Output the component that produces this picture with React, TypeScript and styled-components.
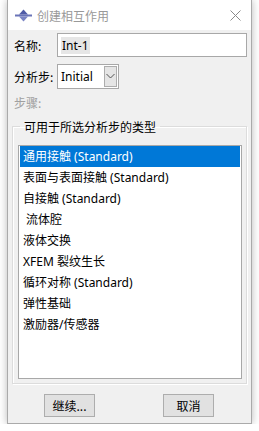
import styled, { createGlobalStyle } from "styled-components";

const GlobalStyle = createGlobalStyle`
  html, body {
    margin: 0;
    padding: 0;
    background: #ffffff;
  }
  body {
    font-family: "Noto Sans", "Noto Sans CJK SC", sans-serif;
    font-size: 12px;
    color: #000;
  }
`;

const Window = styled.div`
  margin-left: 7px;
  width: 243px;
  height: 423px;
  background: #f0f0f0;
  border: 1px solid #aaaaaa;
  border-top: none;
  box-shadow: 0 0 8px rgba(0, 0, 0, 0.28);
  display: flex;
  flex-direction: column;
  overflow: hidden;
`;

const TitleBar = styled.div`
  height: 30px;
  background: #ffffff;
  display: flex;
  align-items: center;
  padding-left: 7px;
  padding-right: 10px;
  flex-shrink: 0;
`;

const TitleText = styled.span`
  margin-left: 5px;
  color: #999999;
  font-family: "Noto Sans CJK SC", sans-serif;
  font-size: 12px;
  flex: 1;
`;

const Body = styled.div`
  flex: 1;
  display: flex;
  flex-direction: column;
  padding: 3px 4px 6px 6px;
`;

const FieldRow = styled.div<{ $gap?: number }>`
  display: flex;
  align-items: center;
  height: 24px;
  margin-bottom: ${(p) => p.$gap ?? 0}px;
`;

const Label = styled.span<{ $disabled?: boolean }>`
  width: 43px;
  flex-shrink: 0;
  font-family: "Noto Sans CJK SC", sans-serif;
  color: ${(p) => (p.$disabled ? "#a0a0a0" : "#000")};
  line-height: 17px;
`;

const TextBox = styled.div`
  flex: 1;
  height: 24px;
  box-sizing: border-box;
  background: #fff;
  border: 1px solid #a8a8a8;
  display: flex;
  align-items: center;
  padding-left: 3px;
`;

const Selected = styled.span`
  background: #e6e6e6;
  padding: 0 1px;
  line-height: 17px;
`;

const Combo = styled.div`
  width: 62px;
  height: 25px;
  box-sizing: border-box;
  background: #fff;
  border: 1px solid #a8a8a8;
  display: flex;
  align-items: stretch;
  padding: 1px;
`;

const ComboText = styled.span`
  flex: 1;
  display: flex;
  align-items: center;
  padding-left: 2px;
`;

const ComboButton = styled.span`
  width: 11px;
  background: #e5e5e5;
  border: 1px solid #adadad;
  display: flex;
  align-items: center;
  justify-content: center;
`;

const StepLabel = styled.div`
  margin-top: 6px;
  height: 17px;
  line-height: 17px;
  font-family: "Noto Sans CJK SC", sans-serif;
  color: #a0a0a0;
`;

const Group = styled.fieldset`
  margin: 7px 0 0 -2px;
  width: 235px;
  box-sizing: border-box;
  border: 1px solid #dcdcdc;
  box-shadow: inset 1px 1px 0 #ffffff, 1px 1px 0 #ffffff;
  padding: 10px 4px 4px 5px;
  min-width: 0;
`;

const Legend = styled.legend`
  margin-left: 2px;
  padding: 0 4px;
  line-height: 17px;
  font-family: "Noto Sans CJK SC", sans-serif;
`;

const ListBox = styled.div`
  height: 234px;
  box-sizing: border-box;
  background: #fff;
  border: 1px solid #a8a8a8;
  padding: 0 1px;
`;

const ListItem = styled.div<{ $active?: boolean }>`
  height: 21px;
  line-height: 21px;
  padding-left: 3px;
  white-space: pre;
  font-family: "Noto Sans", "Noto Sans CJK SC", sans-serif;
  background: ${(p) => (p.$active ? "#0078d7" : "transparent")};
  color: ${(p) => (p.$active ? "#fff" : "#000")};
`;

const ButtonRow = styled.div`
  display: flex;
  margin-top: 10px;
  padding-left: 30px;
  gap: 68px;
`;

const Button = styled.button`
  width: 51px;
  height: 23px;
  box-sizing: border-box;
  background: #e1e1e1;
  border: 1px solid #adadad;
  border-radius: 0;
  padding: 0;
  font-family: "Noto Sans CJK SC", sans-serif;
  font-size: 12px;
  color: #000;
`;

const items = [
  "通用接触 (Standard)",
  "表面与表面接触 (Standard)",
  "自接触 (Standard)",
  " 流体腔",
  "液体交换",
  "XFEM 裂纹生长",
  "循环对称 (Standard)",
  "弹性基础",
  "激励器/传感器",
];

function AppIcon() {
  return (
    <svg width="17" height="13" viewBox="0 0 17 13">
      <rect x="0" y="5.5" width="17" height="2" fill="#6a74b8" />
      <polygon points="4,5.5 8.5,0.5 13,5.5" fill="#4e5aa6" />
      <polygon points="4,7.5 8.5,12.5 13,7.5" fill="#7a84c4" />
    </svg>
  );
}

function CloseIcon() {
  return (
    <svg width="11" height="11" viewBox="0 0 11 11">
      <path d="M0.5 0.5 L10.5 10.5 M10.5 0.5 L0.5 10.5" stroke="#8a8a8a" strokeWidth="1" />
    </svg>
  );
}

function Chevron() {
  return (
    <svg width="9" height="6" viewBox="0 0 9 6">
      <path d="M0.5 1 L4.5 5 L8.5 1" stroke="#555" strokeWidth="1" fill="none" />
    </svg>
  );
}

export default function App() {
  return (
    <>
      <GlobalStyle />
      <Window>
        <TitleBar>
          <AppIcon />
          <TitleText>创建相互作用</TitleText>
          <CloseIcon />
        </TitleBar>
        <Body>
          <FieldRow $gap={7}>
            <Label>名称:</Label>
            <TextBox>
              <Selected>Int-1</Selected>
            </TextBox>
          </FieldRow>
          <FieldRow>
            <Label>分析步:</Label>
            <Combo>
              <ComboText>Initial</ComboText>
              <ComboButton>
                <Chevron />
              </ComboButton>
            </Combo>
          </FieldRow>
          <StepLabel>步骤:</StepLabel>
          <Group>
            <Legend>可用于所选分析步的类型</Legend>
            <ListBox>
              {items.map((item, i) => (
                <ListItem key={i} $active={i === 0}>
                  {item}
                </ListItem>
              ))}
            </ListBox>
          </Group>
          <ButtonRow>
            <Button>继续...</Button>
            <Button>取消</Button>
          </ButtonRow>
        </Body>
      </Window>
    </>
  );
}
